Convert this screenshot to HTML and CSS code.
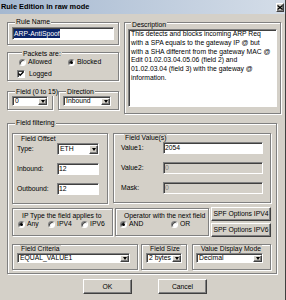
FILE: index.html
```html
<!DOCTYPE html>
<html lang="en">
<head>
    <meta charset="UTF-8">
    <meta name="viewport" content="width=device-width, initial-scale=1.0">
    <title>Rule Edition in raw mode</title>
    <link rel="stylesheet" href="styles.css">
</head>
<body>
    <div class="window">
        <div class="titlebar">
            <span class="title">Rule Edition in raw mode</span>
            <span class="close">
                <svg width="6" height="5" viewBox="0 0 6 5"><path d="M0.5 0.5L5.5 4.5M5.5 0.5L0.5 4.5" stroke="#000" stroke-width="1.3"/></svg>
            </span>
        </div>

        <div class="content">
            <div class="top">
                <div class="left">
                    <div class="group rule-name">
                        <span class="caption">Rule Name</span>
                        <div class="edit"><span class="selected">ARP-AntiSpoof</span></div>
                    </div>

                    <div class="group packets">
                        <span class="caption">Packets are:</span>
                        <div class="packet-options">
                            <span class="option"><span class="radio"></span>Allowed</span>
                            <span class="option"><span class="radio checked"></span>Blocked</span>
                            <span class="option logged"><span class="check">
                                <svg width="6" height="6" viewBox="0 0 6 6"><path d="M0.5 2.5L2.2 4.3L5.5 0.8" fill="none" stroke="#000" stroke-width="1.3"/></svg>
                            </span>Logged</span>
                        </div>
                    </div>

                    <div class="pair">
                        <div class="group field-num">
                            <span class="caption">Field (0 to 15)</span>
                            <div class="combo"><span class="value">0</span><span class="arrow"></span></div>
                        </div>
                        <div class="group direction">
                            <span class="caption">Direction</span>
                            <div class="combo"><span class="value">Inbound</span><span class="arrow"></span></div>
                        </div>
                    </div>
                </div>

                <div class="group description">
                    <span class="caption">Description</span>
                    <div class="memo">This detects and blocks incoming ARP Req<br>with a SPA equals to the gateway IP @ but<br>with a SHA different from the gateway MAC @<br>Edit 01.02.03.04.05.06 (field 2) and<br>01.02.03.04 (field 3) with the gateway @<br>information.</div>
                </div>
            </div>

            <div class="group filtering">
                <span class="caption">Field filtering</span>

                <div class="row row-a">
                    <div class="group offset">
                        <span class="caption">Field Offset</span>
                        <div class="form-grid">
                            <span>Type:</span>
                            <div class="combo"><span class="value">ETH</span><span class="arrow"></span></div>
                            <span>Inbound:</span>
                            <div class="edit">12</div>
                            <span>Outbound:</span>
                            <div class="edit">12</div>
                        </div>
                    </div>
                    <div class="group values">
                        <span class="caption">Field Value(s)</span>
                        <div class="form-grid">
                            <span>Value1:</span>
                            <div class="edit">2054</div>
                            <span>Value2:</span>
                            <div class="edit disabled">0</div>
                            <span>Mask:</span>
                            <div class="edit disabled">0</div>
                        </div>
                    </div>
                </div>

                <div class="row row-b">
                    <div class="group ip-type">
                        <span class="caption">IP Type the field applies to</span>
                        <div class="radio-row">
                            <span class="option"><span class="radio checked"></span>Any</span>
                            <span class="option"><span class="radio"></span>IPV4</span>
                            <span class="option"><span class="radio"></span>IPV6</span>
                        </div>
                    </div>
                    <div class="group operator">
                        <span class="caption">Operator with the next field</span>
                        <div class="radio-row">
                            <span class="option"><span class="radio checked"></span>AND</span>
                            <span class="option"><span class="radio"></span>OR</span>
                        </div>
                    </div>
                    <div class="spf">
                        <div class="button">SPF Options IPV4</div>
                        <div class="button">SPF Options IPV6</div>
                    </div>
                </div>

                <div class="row row-c">
                    <div class="group criteria">
                        <span class="caption">Field Criteria</span>
                        <div class="combo"><span class="value">EQUAL_VALUE1</span><span class="arrow"></span></div>
                    </div>
                    <div class="group size">
                        <span class="caption">Field Size</span>
                        <div class="combo"><span class="value">2 bytes</span><span class="arrow"></span></div>
                    </div>
                    <div class="group display-mode">
                        <span class="caption">Value Display Mode</span>
                        <div class="combo"><span class="value">Decimal</span><span class="arrow"></span></div>
                    </div>
                </div>
            </div>

            <div class="actions">
                <div class="button">OK</div>
                <div class="button">Cancel</div>
            </div>
        </div>
    </div>
</body>
</html>
```

FILE: styles.css
```css
* {
    box-sizing: border-box;
}

body {
    margin: 0;
    background-color: #fff;
    font-family: "Liberation Sans", Arial, sans-serif;
    font-size: 6.8px;
    line-height: 8px;
    color: #000;
}

.window {
    width: 286px;
    height: 300px;
    background-color: #d4d0c8;
    border-right: 1px solid #404040;
}

.titlebar {
    height: 14px;
    display: flex;
    align-items: center;
    justify-content: space-between;
    padding: 0 1px 0 1px;
    background: linear-gradient(90deg, #a5b8d0, #d4dde8);
}

.title {
    font-weight: bold;
    font-size: 7.4px;
}

.close {
    width: 8px;
    height: 9px;
    display: flex;
    align-items: center;
    justify-content: center;
    background-color: #d4d0c8;
    border: 1px solid;
    border-color: #fff #404040 #404040 #fff;
    box-shadow: inset -1px -1px 0 #808080;
}

.content {
    padding: 8px 0 0 7px;
}

/* group boxes */
.group {
    border: 1px solid #808080;
    box-shadow: inset 1px 1px 0 #fff, 1px 1px 0 #fff;
}

.caption {
    display: table;
    margin: -5px 0 0 3px;
    padding: 0 1px;
    line-height: 8px;
    background-color: #d4d0c8;
    white-space: nowrap;
}

.top {
    display: flex;
    align-items: flex-start;
    gap: 5px;
}

.left {
    width: 112px;
    display: flex;
    flex-direction: column;
}

.rule-name {
    padding: 0 4px 4px 4px;
}

.rule-name .edit {
    margin-top: 1px;
    height: 13px;
}

.packets {
    margin-top: 7px;
    padding: 2px 0 2px 11px;
}

.packet-options {
    display: grid;
    grid-template-columns: 49px auto;
    row-gap: 4px;
}

.packets .logged {
    margin-left: -2px;
}

.pair {
    display: flex;
    gap: 5px;
    margin-top: 10px;
}

.field-num {
    width: 46px;
    padding: 1px 4px 3px 4px;
}

.direction {
    width: 61px;
    padding: 1px 7px 3px 4px;
}

.description {
    width: 157px;
    padding: 3px 3px 6px 3px;
}

.memo {
    height: 78px;
    padding: 0 2px;
    background-color: #fff;
    border: 1px solid;
    border-color: #808080 #fff #fff #808080;
    box-shadow: inset 1px 1px 0 #404040;
    line-height: 8.8px;
    white-space: nowrap;
    overflow: hidden;
}

/* field filtering */
.filtering {
    width: 270px;
    margin-top: 9px;
    padding: 0 5px 3px 4px;
}

.row {
    display: flex;
    align-items: flex-start;
}

.row-a {
    gap: 5px;
    margin-top: 6px;
}

.offset {
    width: 96px;
    padding: 6px 0 8px 4px;
}

.offset .form-grid {
    grid-template-columns: 40px 42px;
}

.values {
    width: 158px;
    padding: 5px 0 8px 7px;
}

.values .form-grid {
    grid-template-columns: 42px 100px;
}

.form-grid {
    display: grid;
    row-gap: 8px;
    align-items: center;
}

.form-grid .edit,
.form-grid .combo {
    height: 12px;
}

.row-b {
    gap: 2px;
    margin-top: 4px;
}

.ip-type {
    width: 101px;
    padding: 8px 0 7px 5px;
}

.ip-type .radio-row {
    grid-template-columns: 30px 33px auto;
}

.operator {
    width: 94px;
    padding: 8px 0 7px 4px;
}

.operator .radio-row {
    grid-template-columns: 51px auto;
}

.radio-row {
    display: grid;
}

.spf {
    width: 60px;
    margin-top: -1px;
    display: flex;
    flex-direction: column;
    gap: 2px;
}

.spf .button {
    height: 14px;
}

.row-c {
    margin-top: 7px;
}

.row-c .group {
    padding: 5px 4px 6px 4px;
}

.criteria {
    width: 126px;
}

.criteria .combo {
    width: 113px;
}

.size {
    width: 46px;
    margin-left: 3px;
}

.display-mode {
    width: 79px;
    margin-left: 5px;
}

.display-mode .combo {
    width: 67px;
    margin-left: -1px;
}

.actions {
    display: flex;
    gap: 26px;
    margin: 5px 0 0 76px;
}

.actions .button {
    width: 49px;
    height: 15px;
}

/* controls */
.edit {
    display: flex;
    align-items: center;
    padding-left: 1px;
    background-color: #fff;
    border: 1px solid;
    border-color: #808080 #fff #fff #808080;
    box-shadow: inset 1px 1px 0 #404040;
    white-space: nowrap;
}

.edit.disabled {
    background-color: #d4d0c8;
    color: #808080;
}

.selected {
    background-color: #0a246a;
    color: #fff;
    line-height: 9px;
}

.combo {
    display: flex;
    background-color: #fff;
    border: 1px solid;
    border-color: #808080 #fff #fff #808080;
    box-shadow: inset 1px 1px 0 #404040;
}

.combo .value {
    flex: 1;
    display: flex;
    align-items: center;
    padding-left: 2px;
    white-space: nowrap;
    overflow: hidden;
}

.combo .arrow {
    width: 9px;
    margin: 1px 0 0 0;
    display: flex;
    align-items: center;
    justify-content: center;
    background-color: #d4d0c8;
    border: 1px solid;
    border-color: #fff #404040 #404040 #fff;
    box-shadow: inset -1px -1px 0 #808080;
}

.combo .arrow::after {
    content: "";
    border-left: 2.5px solid transparent;
    border-right: 2.5px solid transparent;
    border-top: 3px solid #000;
}

.option {
    display: flex;
    align-items: center;
    gap: 2px;
    white-space: nowrap;
}

.radio {
    width: 7px;
    height: 7px;
    display: flex;
    align-items: center;
    justify-content: center;
    border-radius: 50%;
    background-color: #fff;
    border: 1px solid;
    border-color: #808080 #fff #fff #808080;
    box-shadow: inset 1px 1px 0 #404040;
}

.radio.checked::after {
    content: "";
    width: 3px;
    height: 3px;
    border-radius: 50%;
    background-color: #000;
}

.check {
    width: 8px;
    height: 8px;
    margin-right: 2px;
    display: flex;
    align-items: center;
    justify-content: center;
    background-color: #fff;
    border: 1px solid;
    border-color: #808080 #fff #fff #808080;
    box-shadow: inset 1px 1px 0 #404040;
}

.button {
    display: flex;
    align-items: center;
    justify-content: center;
    background-color: #d4d0c8;
    border: 1px solid;
    border-color: #fff #404040 #404040 #fff;
    box-shadow: inset -1px -1px 0 #808080;
    white-space: nowrap;
}
```
